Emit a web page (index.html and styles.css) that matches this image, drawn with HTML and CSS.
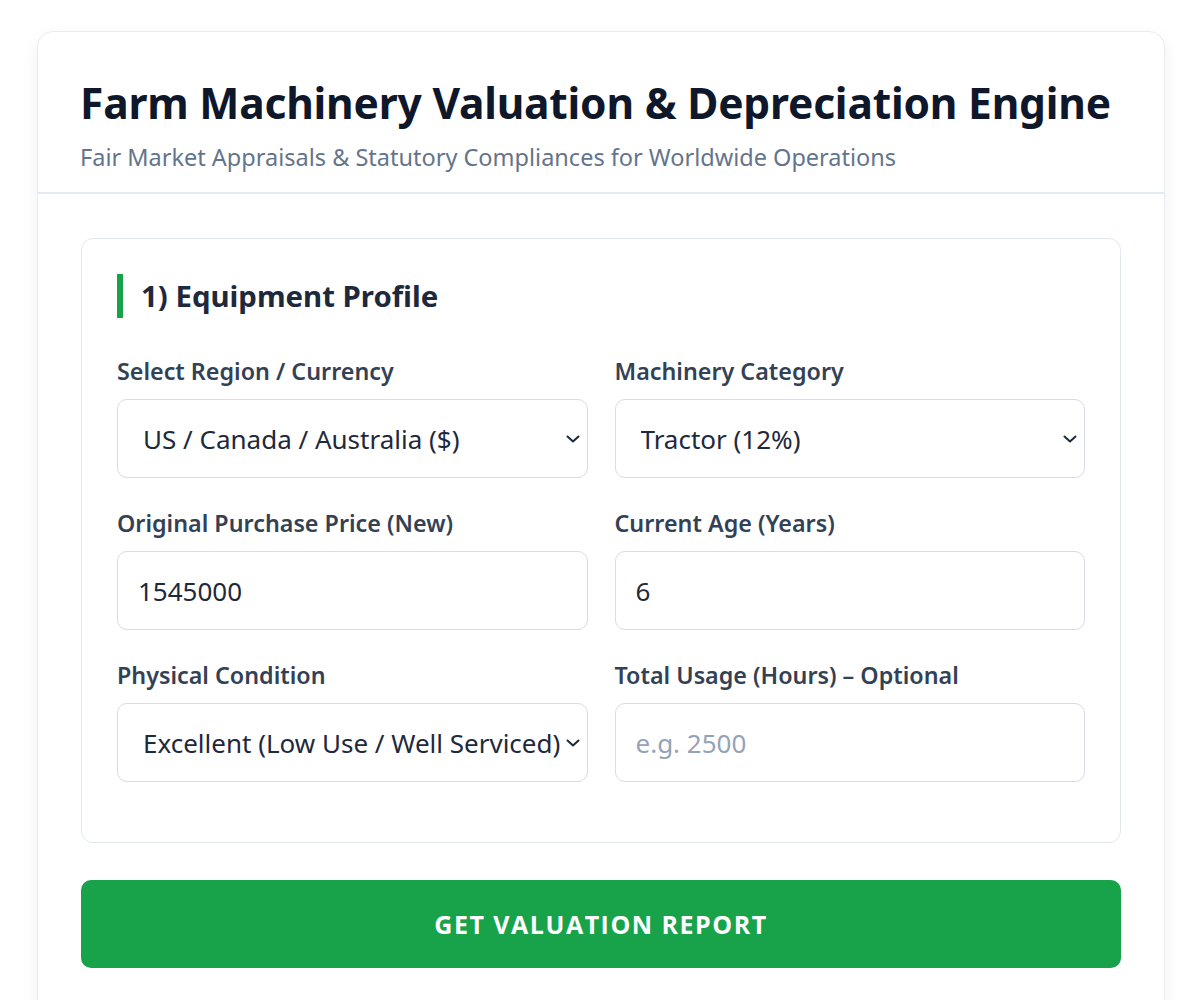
FILE: index.html
```html
<!DOCTYPE html>
<html lang="en">
<head>
<meta charset="utf-8">
<title>Farm Machinery Valuation &amp; Depreciation Engine</title>
<link rel="stylesheet" href="styles.css">
</head>
<body>
<main class="card">
  <header class="card-header">
    <h1 class="title">Farm Machinery Valuation &amp; Depreciation Engine</h1>
    <p class="subtitle">Fair Market Appraisals &amp; Statutory Compliances for Worldwide Operations</p>
  </header>
  <div class="card-body">
    <section class="panel">
      <h2 class="panel-title">1) Equipment Profile</h2>
      <div class="grid">
        <div class="field">
          <label class="label" for="region">Select Region / Currency</label>
          <div class="select-wrap">
            <select id="region" class="control select">
              <option>US / Canada / Australia ($)</option>
            </select>
            <svg class="chev" viewBox="0 0 14 8" width="14" height="8"><path d="M1.5 1.5 L7 6.5 L12.5 1.5" fill="none" stroke="#1e293b" stroke-width="2" stroke-linecap="round" stroke-linejoin="round"/></svg>
          </div>
        </div>
        <div class="field">
          <label class="label" for="cat">Machinery Category</label>
          <div class="select-wrap">
            <select id="cat" class="control select">
              <option>Tractor (12%)</option>
            </select>
            <svg class="chev" viewBox="0 0 14 8" width="14" height="8"><path d="M1.5 1.5 L7 6.5 L12.5 1.5" fill="none" stroke="#1e293b" stroke-width="2" stroke-linecap="round" stroke-linejoin="round"/></svg>
          </div>
        </div>
        <div class="field">
          <label class="label" for="price">Original Purchase Price (New)</label>
          <input id="price" class="control" type="text" value="1545000">
        </div>
        <div class="field">
          <label class="label" for="age">Current Age (Years)</label>
          <input id="age" class="control" type="text" value="6">
        </div>
        <div class="field">
          <label class="label" for="cond">Physical Condition</label>
          <div class="select-wrap">
            <select id="cond" class="control select">
              <option>Excellent (Low Use / Well Serviced)</option>
            </select>
            <svg class="chev" viewBox="0 0 14 8" width="14" height="8"><path d="M1.5 1.5 L7 6.5 L12.5 1.5" fill="none" stroke="#1e293b" stroke-width="2" stroke-linecap="round" stroke-linejoin="round"/></svg>
          </div>
        </div>
        <div class="field">
          <label class="label" for="hours">Total Usage (Hours) – Optional</label>
          <input id="hours" class="control" type="text" placeholder="e.g. 2500">
        </div>
      </div>
    </section>
    <button class="btn" type="button">GET VALUATION REPORT</button>
  </div>
</main>
</body>
</html>
```
FILE: styles.css
```css
* { box-sizing: border-box; }
html, body { margin: 0; padding: 0; background: #ffffff; }
body {
  font-family: "Noto Sans", "Open Sans", sans-serif;
  color: #1e293b;
  padding: 31px 35px 0 37px;
}
.card {
  background: #fff;
  border: 1px solid #e8edf3;
  border-radius: 16px;
  box-shadow: 0 6px 18px rgba(15, 23, 42, 0.06);
  min-height: 1000px;
}
.card-header {
  padding: 45px 43px 20px 42px;
  border-bottom: 2px solid #e4eaf2;
}
.title {
  margin: 0;
  font-size: 42.5px;
  line-height: 52px;
  font-weight: 700;
  color: #0f172a;
  letter-spacing: -0.2px;
  white-space: nowrap;
}
.subtitle {
  margin: 13px 0 0;
  font-size: 23.5px;
  line-height: 30px;
  color: #64748b;
  white-space: nowrap;
}
.card-body {
  padding: 44px 43px 44px;
}
.panel {
  border: 1px solid #e2e8f0;
  border-radius: 12px;
  padding: 35px 35px 60px;
}
.panel-title {
  margin: 0 0 38px;
  border-left: 6px solid #16a34a;
  padding-left: 18px;
  font-size: 29.4px;
  line-height: 44px;
  font-weight: 700;
  color: #1e293b;
}
.grid {
  display: grid;
  grid-template-columns: 1fr 1fr;
  column-gap: 27px;
  row-gap: 30px;
}
.field { display: flex; flex-direction: column; }
.label {
  font-size: 23.3px;
  line-height: 30px;
  font-weight: 600;
  color: #334155;
  margin-bottom: 13px;
  white-space: nowrap;
}
.control {
  display: block;
  height: 79px;
  width: 100%;
  border: 1.5px solid #d5dde8;
  border-radius: 10px;
  background: #fff;
  font-family: inherit;
  font-size: 26px;
  color: #1e293b;
  padding: 0 20px;
  outline: none;
}
.control::placeholder { color: #94a3b8; }
.select-wrap { position: relative; }
.select {
  -webkit-appearance: none;
  appearance: none;
  padding: 0 8px 0 25px;
}
.chev {
  position: absolute;
  right: 8px;
  top: 36px;
  pointer-events: none;
}
.btn {
  display: block;
  width: 100%;
  margin-top: 37px;
  height: 88px;
  border: none;
  border-radius: 10px;
  background: #18a34a;
  color: #fff;
  font-family: "Open Sans", "Noto Sans", sans-serif;
  font-size: 25px;
  font-weight: 700;
  letter-spacing: 1.5px;
  cursor: pointer;
}
```
